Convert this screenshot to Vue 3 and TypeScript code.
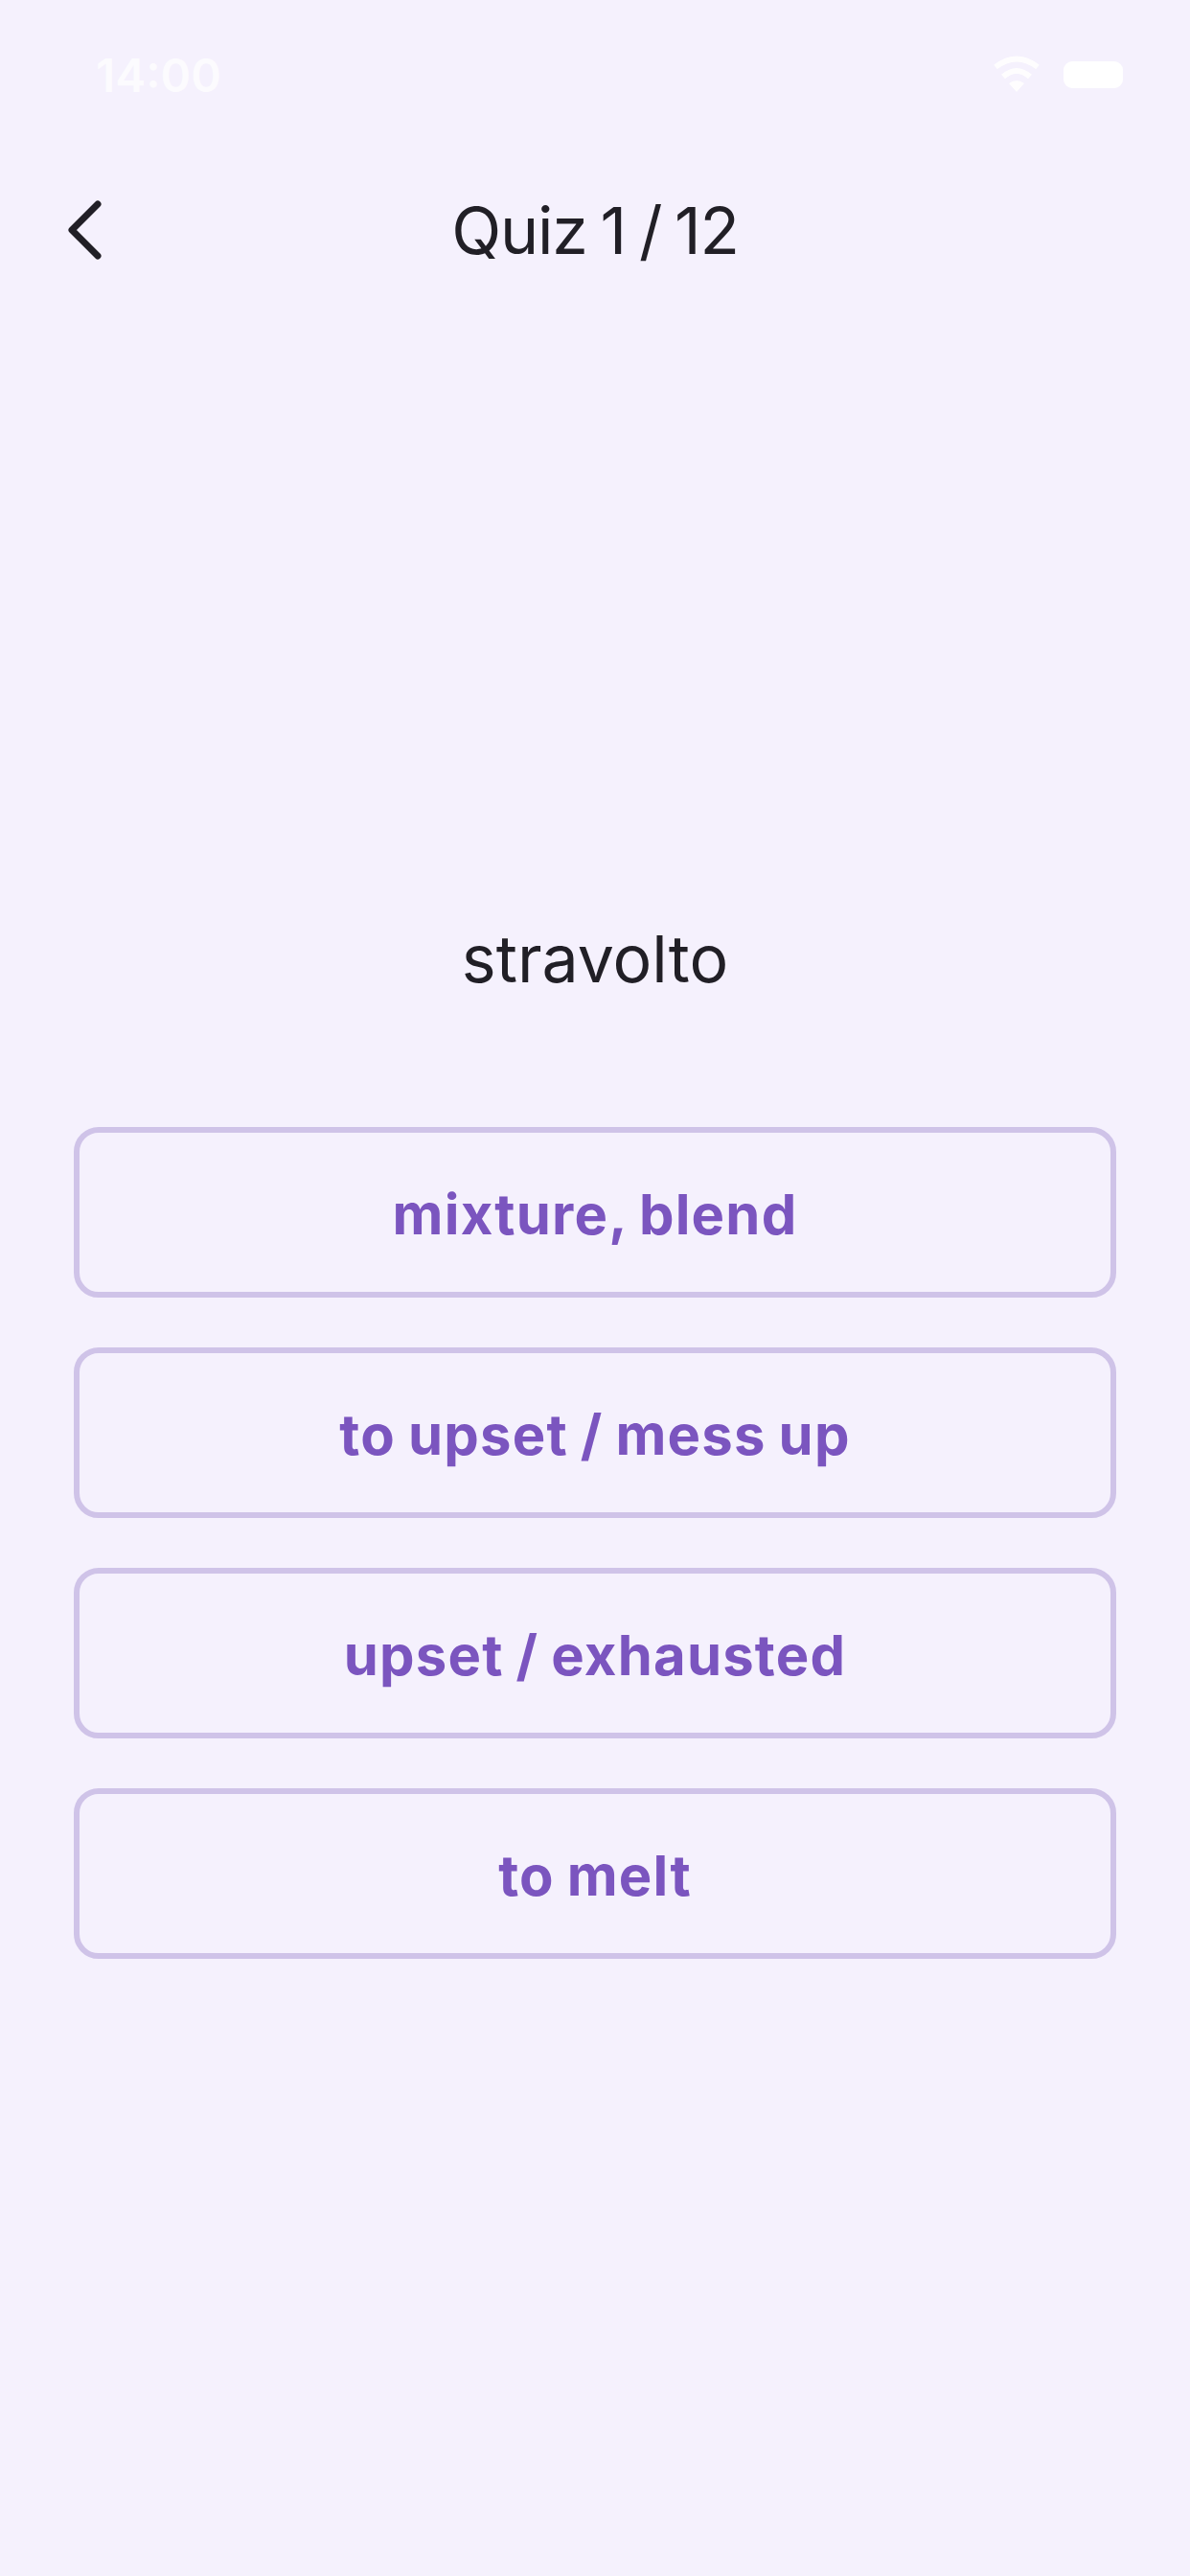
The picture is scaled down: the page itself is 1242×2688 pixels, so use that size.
<template>
  <div class="screen">
    <div class="status-bar">
      <span class="time">14:00</span>
      <div class="status-icons">
        <svg class="wifi" viewBox="0 0 50 40" width="50" height="40">
          <path d="M25 38 L17 29 Q25 23 33 29 Z" fill="#fff" />
          <path d="M11 22 Q25 10 39 22" fill="none" stroke="#fff" stroke-width="6" />
          <path d="M3 12 Q25 -5 47 12" fill="none" stroke="#fff" stroke-width="6" />
        </svg>
        <div class="battery"></div>
      </div>
    </div>

    <header class="top-bar">
      <button class="back" aria-label="Back">
        <svg viewBox="0 0 40 64" width="40" height="64">
          <path d="M35 5 L8 32 L35 59" fill="none" stroke="#211f26" stroke-width="7" stroke-linecap="round" stroke-linejoin="round" />
        </svg>
      </button>
      <h1>Quiz {{ current }} / {{ total }}</h1>
    </header>

    <main class="quiz">
      <p class="word">{{ word }}</p>
      <div class="options">
        <button v-for="opt in options" :key="opt" class="option">{{ opt }}</button>
      </div>
    </main>
  </div>
</template>

<script setup lang="ts">
const current = 1
const total = 12
const word = 'stravolto'
const options: string[] = ['mixture, blend', 'to upset / mess up', 'upset / exhausted', 'to melt']
</script>

<style scoped>
.screen {
  width: 1242px;
  height: 2688px;
  background: #f5f1fd;
  font-family: Inter, "Liberation Sans", sans-serif;
  color: #211f26;
  overflow: hidden;
}
.status-bar {
  height: 80px;
  padding: 38px 70px 0 100px;
  display: flex;
  justify-content: space-between;
  align-items: center;
}
.time {
  font-size: 48px;
  font-weight: 600;
  color: #fff;
  opacity: 0.75;
}
.status-icons {
  display: flex;
  align-items: center;
  gap: 24px;
}
.wifi {
  opacity: 0.9;
}
.battery {
  width: 62px;
  height: 28px;
  border-radius: 9px;
  background: #fff;
}
.top-bar {
  position: relative;
  margin-top: 62px;
  height: 120px;
  display: flex;
  align-items: center;
  justify-content: center;
}
.top-bar h1 {
  margin: 0;
  font-size: 68px;
  font-weight: 400;
  letter-spacing: -1.2px;
  word-spacing: -4px;
}
.back {
  position: absolute;
  left: 67px;
  top: 28px;
  padding: 0;
  border: 0;
  background: none;
  line-height: 0;
}
.quiz {
  padding: 0 77px;
}
.word {
  margin: 0;
  padding-top: 659px;
  text-align: center;
  font-size: 68px;
  font-weight: 420;
  line-height: 82px;
}
.options {
  margin-top: 135px;
  display: flex;
  flex-direction: column;
  gap: 52px;
}
.option {
  height: 178px;
  padding: 3px 0 0;
  border: 6px solid #cfc3e8;
  border-radius: 26px;
  background: transparent;
  font-family: inherit;
  font-size: 58px;
  font-weight: 670;
  letter-spacing: 1.2px;
  word-spacing: -2px;
  color: #7b55bf;
}
</style>
